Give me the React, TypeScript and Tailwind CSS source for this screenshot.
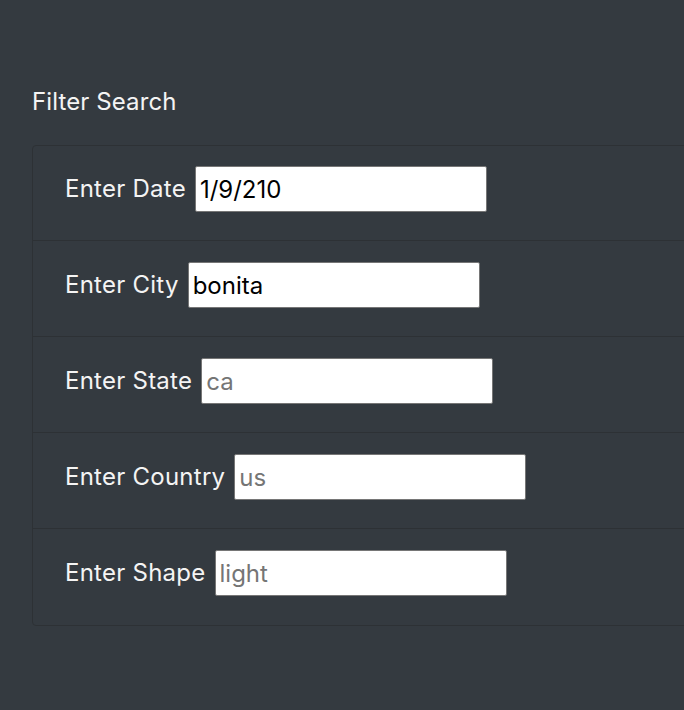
import React from 'react';

const FIELDS = [
  { label: 'Enter Date', value: '1/9/210', placeholder: '' },
  { label: 'Enter City', value: 'bonita', placeholder: '' },
  { label: 'Enter State', value: '', placeholder: 'ca' },
  { label: 'Enter Country', value: '', placeholder: 'us' },
  { label: 'Enter Shape', value: '', placeholder: 'light' },
];

const App: React.FC = () => {
  return (
    <div className="h-[710px] w-[684px] overflow-hidden bg-[#343a40] font-['Inter',sans-serif] text-white">
      <div className="pl-[32px] pt-[84px]">
        <h2 className="text-[24px] leading-[36px] font-normal tracking-[0.1px] text-[#f4f4f4]">Filter Search</h2>
        <ul className="mt-[25px] w-[700px] rounded border border-[#2d3135]">
          {FIELDS.map((field, i) => (
            <li
              key={field.label}
              className={`flex items-start pl-[32px] ${
                i === 0 ? 'h-[94px] pt-[20px]' : 'border-t border-[#2d3135] pt-[21px]'
              } ${i > 0 && i < FIELDS.length - 1 ? 'h-[96px]' : ''} ${i === FIELDS.length - 1 ? 'h-[97px]' : ''}`}
            >
              <label className="mr-[9px] text-[24px] leading-[46px] tracking-[0.25px] text-[#f4f4f4]">
                {field.label}
              </label>
              <input
                type="text"
                defaultValue={field.value}
                placeholder={field.placeholder}
                className="h-[46px] w-[292px] rounded-[2px] border border-[#767676] bg-white px-[4px] text-[24px] text-black placeholder:text-[#757575] outline-none"
              />
            </li>
          ))}
        </ul>
      </div>
    </div>
  );
};

export default App;
